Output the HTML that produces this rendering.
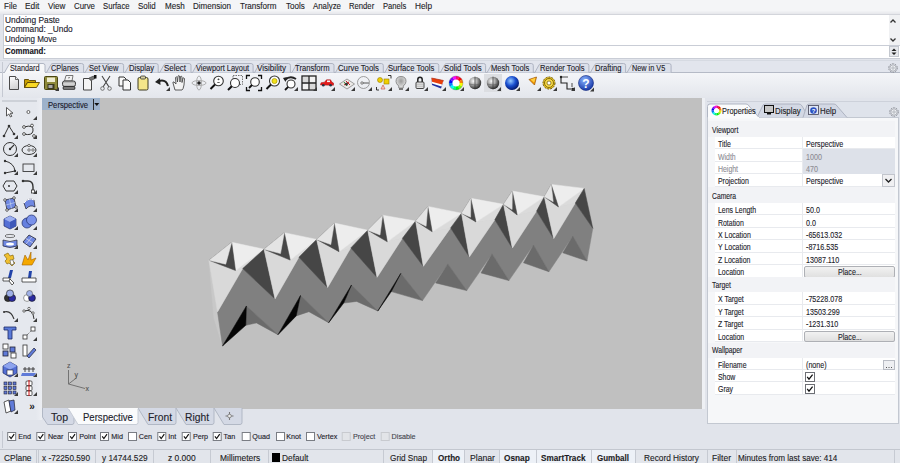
<!DOCTYPE html><html><head><meta charset="utf-8"><style>
*{margin:0;padding:0;box-sizing:border-box}
body{width:900px;height:463px;overflow:hidden;position:relative;background:#e1e4eb;font-family:"Liberation Sans", sans-serif;font-size:8px;color:#1c1c24}
.ab{position:absolute}
.t{position:absolute;white-space:nowrap;-webkit-text-stroke:0.12px currentColor}
</style></head><body>
<div class="ab" style="left:0px;top:0px;width:900px;height:14px;background:linear-gradient(#f4f5f7 0,#f4f5f7 75%,#e6e7eb 100%)"></div>
<div class="t" style="left:4.20px;top:1.65px;font-size:8.8px;line-height:8.8px;color:#1e1e28;transform:scaleX(0.917);transform-origin:0 0;">File</div>
<div class="t" style="left:25.30px;top:1.65px;font-size:8.8px;line-height:8.8px;color:#1e1e28;transform:scaleX(0.950);transform-origin:0 0;">Edit</div>
<div class="t" style="left:47.80px;top:1.65px;font-size:8.8px;line-height:8.8px;color:#1e1e28;transform:scaleX(0.920);transform-origin:0 0;">View</div>
<div class="t" style="left:73.70px;top:1.65px;font-size:8.8px;line-height:8.8px;color:#1e1e28;transform:scaleX(0.895);transform-origin:0 0;">Curve</div>
<div class="t" style="left:103.20px;top:1.65px;font-size:8.8px;line-height:8.8px;color:#1e1e28;transform:scaleX(0.874);transform-origin:0 0;">Surface</div>
<div class="t" style="left:137.80px;top:1.65px;font-size:8.8px;line-height:8.8px;color:#1e1e28;transform:scaleX(0.904);transform-origin:0 0;">Solid</div>
<div class="t" style="left:164.50px;top:1.65px;font-size:8.8px;line-height:8.8px;color:#1e1e28;transform:scaleX(0.915);transform-origin:0 0;">Mesh</div>
<div class="t" style="left:192.80px;top:1.65px;font-size:8.8px;line-height:8.8px;color:#1e1e28;transform:scaleX(0.914);transform-origin:0 0;">Dimension</div>
<div class="t" style="left:239.80px;top:1.65px;font-size:8.8px;line-height:8.8px;color:#1e1e28;transform:scaleX(0.918);transform-origin:0 0;">Transform</div>
<div class="t" style="left:285.70px;top:1.65px;font-size:8.8px;line-height:8.8px;color:#1e1e28;transform:scaleX(0.915);transform-origin:0 0;">Tools</div>
<div class="t" style="left:313.30px;top:1.65px;font-size:8.8px;line-height:8.8px;color:#1e1e28;transform:scaleX(0.894);transform-origin:0 0;">Analyze</div>
<div class="t" style="left:349.20px;top:1.65px;font-size:8.8px;line-height:8.8px;color:#1e1e28;transform:scaleX(0.873);transform-origin:0 0;">Render</div>
<div class="t" style="left:383.10px;top:1.65px;font-size:8.8px;line-height:8.8px;color:#1e1e28;transform:scaleX(0.866);transform-origin:0 0;">Panels</div>
<div class="t" style="left:414.60px;top:1.65px;font-size:8.8px;line-height:8.8px;color:#1e1e28;transform:scaleX(0.939);transform-origin:0 0;">Help</div>
<div class="ab" style="left:3px;top:14px;width:897px;height:45px;background:#fff;border-top:1px solid #d3d5db;border-left:1px solid #c9cdd6;border-bottom:1px solid #c9cdd6"></div>
<div class="ab" style="left:889px;top:15px;width:11px;height:30px;background:#f0f1f3"></div>
<div class="ab" style="left:4px;top:45px;width:896px;height:1px;background:#c9cdd6"></div>
<div class="t" style="left:4.90px;top:15.85px;font-size:8.8px;line-height:8.8px;color:#20202c;transform:scaleX(0.949);transform-origin:0 0;">Undoing Paste</div>
<div class="t" style="left:4.90px;top:25.45px;font-size:8.8px;line-height:8.8px;color:#20202c;transform:scaleX(0.948);transform-origin:0 0;">Command: _Undo</div>
<div class="t" style="left:4.90px;top:35.05px;font-size:8.8px;line-height:8.8px;color:#20202c;transform:scaleX(0.913);transform-origin:0 0;">Undoing Move</div>
<div class="t" style="left:4.90px;top:46.75px;font-size:8.8px;line-height:8.8px;color:#15151c;font-weight:bold;transform:scaleX(0.892);transform-origin:0 0;">Command:</div>
<svg class="ab" style="left:887px;top:15px" width="12" height="42" viewBox="0 0 12 42"><path d="M3.5 7.5 L6 5 L8.5 7.5" fill="none" stroke="#333" stroke-width="1.3"/><path d="M3.5 23.5 L6 26 L8.5 23.5" fill="none" stroke="#333" stroke-width="1.3"/><rect x="2.5" y="31.5" width="9" height="10" fill="#e6e8ec" stroke="#c4c8cf"/><path d="M4.5 36 L7 33.5 L9.5 36Z M4.5 37.5 L7 40 L9.5 37.5Z" fill="#222"/></svg>
<div class="ab" style="left:0px;top:60px;width:900px;height:13px;background:#e2e5ed"></div>
<div class="ab" style="left:0px;top:60px;width:900px;height:1px;background:#d6dae2"></div>
<div class="ab" style="left:0px;top:72px;width:900px;height:1px;background:#b5bac6"></div>
<svg class="ab" style="left:0;top:58px" width="900" height="16" viewBox="0 58 900 16"><path d="M46.5 72.5 L51.0 64.5 Q51.7 63.5 53.0 63.5 L81.6 63.5 Q83.6 63.5 83.6 65.5 L83.6 72.5" fill="#dce0ea" stroke="#a9afbd" stroke-width="0.9"/><path d="M85.1 72.5 L89.6 64.5 Q90.3 63.5 91.6 63.5 L121.6 63.5 Q123.6 63.5 123.6 65.5 L123.6 72.5" fill="#dce0ea" stroke="#a9afbd" stroke-width="0.9"/><path d="M125.1 72.5 L129.6 64.5 Q130.29999999999998 63.5 131.6 63.5 L156.2 63.5 Q158.2 63.5 158.2 65.5 L158.2 72.5" fill="#dce0ea" stroke="#a9afbd" stroke-width="0.9"/><path d="M159.7 72.5 L164.2 64.5 Q164.89999999999998 63.5 166.2 63.5 L189 63.5 Q191 63.5 191 65.5 L191 72.5" fill="#dce0ea" stroke="#a9afbd" stroke-width="0.9"/><path d="M192.5 72.5 L197.0 64.5 Q197.7 63.5 199.0 63.5 L251.1 63.5 Q253.1 63.5 253.1 65.5 L253.1 72.5" fill="#dce0ea" stroke="#a9afbd" stroke-width="0.9"/><path d="M254.6 72.5 L259.1 64.5 Q259.8 63.5 261.1 63.5 L288.4 63.5 Q290.4 63.5 290.4 65.5 L290.4 72.5" fill="#dce0ea" stroke="#a9afbd" stroke-width="0.9"/><path d="M291.9 72.5 L296.4 64.5 Q297.09999999999997 63.5 298.4 63.5 L332 63.5 Q334 63.5 334 65.5 L334 72.5" fill="#dce0ea" stroke="#a9afbd" stroke-width="0.9"/><path d="M335.5 72.5 L340.0 64.5 Q340.7 63.5 342.0 63.5 L381.3 63.5 Q383.3 63.5 383.3 65.5 L383.3 72.5" fill="#dce0ea" stroke="#a9afbd" stroke-width="0.9"/><path d="M384.8 72.5 L389.3 64.5 Q390.0 63.5 391.3 63.5 L436.8 63.5 Q438.8 63.5 438.8 65.5 L438.8 72.5" fill="#dce0ea" stroke="#a9afbd" stroke-width="0.9"/><path d="M440.3 72.5 L444.8 64.5 Q445.5 63.5 446.8 63.5 L483.6 63.5 Q485.6 63.5 485.6 65.5 L485.6 72.5" fill="#dce0ea" stroke="#a9afbd" stroke-width="0.9"/><path d="M487.1 72.5 L491.6 64.5 Q492.3 63.5 493.6 63.5 L531.3 63.5 Q533.3 63.5 533.3 65.5 L533.3 72.5" fill="#dce0ea" stroke="#a9afbd" stroke-width="0.9"/><path d="M534.8 72.5 L539.3 64.5 Q540.0 63.5 541.3 63.5 L586.9 63.5 Q588.9 63.5 588.9 65.5 L588.9 72.5" fill="#dce0ea" stroke="#a9afbd" stroke-width="0.9"/><path d="M590.4 72.5 L594.9 64.5 Q595.6 63.5 596.9 63.5 L623.6 63.5 Q625.6 63.5 625.6 65.5 L625.6 72.5" fill="#dce0ea" stroke="#a9afbd" stroke-width="0.9"/><path d="M627.1 72.5 L631.6 64.5 Q632.3000000000001 63.5 633.6 63.5 L669.1 63.5 Q671.1 63.5 671.1 65.5 L671.1 72.5" fill="#dce0ea" stroke="#a9afbd" stroke-width="0.9"/><path d="M4.5 72.5 L9.0 64.5 Q9.7 63.5 11.0 63.5 L43 63.5 Q45 63.5 45 65.5 L45 72.5" fill="#f6f7f9" stroke="#a9afbd" stroke-width="0.9"/><rect x="5" y="72" width="40" height="1.2" fill="#f6f7f9"/></svg>
<div class="t" style="left:10.20px;top:64.45px;font-size:8.8px;line-height:8.8px;color:#1e1e2a;transform:scaleX(0.829);transform-origin:0 0;">Standard</div>
<div class="t" style="left:50.50px;top:64.45px;font-size:8.8px;line-height:8.8px;color:#1e1e2a;transform:scaleX(0.833);transform-origin:0 0;">CPlanes</div>
<div class="t" style="left:89.30px;top:64.45px;font-size:8.8px;line-height:8.8px;color:#1e1e2a;transform:scaleX(0.850);transform-origin:0 0;">Set View</div>
<div class="t" style="left:129.30px;top:64.45px;font-size:8.8px;line-height:8.8px;color:#1e1e2a;transform:scaleX(0.866);transform-origin:0 0;">Display</div>
<div class="t" style="left:163.90px;top:64.45px;font-size:8.8px;line-height:8.8px;color:#1e1e2a;transform:scaleX(0.899);transform-origin:0 0;">Select</div>
<div class="t" style="left:195.70px;top:64.45px;font-size:8.8px;line-height:8.8px;color:#1e1e2a;transform:scaleX(0.844);transform-origin:0 0;">Viewport Layout</div>
<div class="t" style="left:257.10px;top:64.45px;font-size:8.8px;line-height:8.8px;color:#1e1e2a;transform:scaleX(0.917);transform-origin:0 0;">Visibility</div>
<div class="t" style="left:294.70px;top:64.45px;font-size:8.8px;line-height:8.8px;color:#1e1e2a;transform:scaleX(0.868);transform-origin:0 0;">Transform</div>
<div class="t" style="left:338.00px;top:64.45px;font-size:8.8px;line-height:8.8px;color:#1e1e2a;transform:scaleX(0.883);transform-origin:0 0;">Curve Tools</div>
<div class="t" style="left:388.20px;top:64.45px;font-size:8.8px;line-height:8.8px;color:#1e1e2a;transform:scaleX(0.871);transform-origin:0 0;">Surface Tools</div>
<div class="t" style="left:443.60px;top:64.45px;font-size:8.8px;line-height:8.8px;color:#1e1e2a;transform:scaleX(0.889);transform-origin:0 0;">Solid Tools</div>
<div class="t" style="left:491.10px;top:64.45px;font-size:8.8px;line-height:8.8px;color:#1e1e2a;transform:scaleX(0.864);transform-origin:0 0;">Mesh Tools</div>
<div class="t" style="left:539.90px;top:64.45px;font-size:8.8px;line-height:8.8px;color:#1e1e2a;transform:scaleX(0.863);transform-origin:0 0;">Render Tools</div>
<div class="t" style="left:595.10px;top:64.45px;font-size:8.8px;line-height:8.8px;color:#1e1e2a;transform:scaleX(0.860);transform-origin:0 0;">Drafting</div>
<div class="t" style="left:632.40px;top:64.45px;font-size:8.8px;line-height:8.8px;color:#1e1e2a;transform:scaleX(0.828);transform-origin:0 0;">New in V5</div>
<svg class="ab" style="left:887.0px;top:61.5px" width="12" height="12" viewBox="0 0 12 12"><circle cx="6" cy="6" r="4.3" fill="none" stroke="#8a8d94" stroke-width="1" stroke-dasharray="1.6 1.1"/><circle cx="6" cy="6" r="3.2" fill="#eef0f4" stroke="#9a9da4" stroke-width="0.8"/><circle cx="6" cy="6" r="1.2" fill="none" stroke="#9a9da4" stroke-width="0.7"/></svg>
<div class="ab" style="left:0px;top:73px;width:900px;height:25px;background:linear-gradient(#f4f5f8,#e3e6ec)"></div>
<div class="ab" style="left:2px;top:62px;width:1px;height:35px;background:#c5c9d2"></div>
<svg class="ab" style="left:4.5px;top:74.0px" width="18" height="18" viewBox="0 0 18 18"><defs><linearGradient id="ndg" x1="0" y1="0" x2="0.3" y2="1"><stop offset="0" stop-color="#fff"/><stop offset="1" stop-color="#d4d4d4"/></linearGradient></defs><path d="M4.5 2.5 L10.5 2.5 L13.5 5.5 L13.5 15.5 L4.5 15.5Z" fill="url(#ndg)" stroke="#4a4a4a" stroke-width="1"/><path d="M10.5 2.5 L10.5 5.5 L13.5 5.5" fill="#e8e8e8" stroke="#4a4a4a" stroke-width="0.8"/></svg><svg class="ab" style="left:23.0px;top:74.0px" width="18" height="18" viewBox="0 0 18 18"><path d="M1.5 5.5 L5.5 5.5 L6.5 6.5 L12.5 6.5 L12.5 8.5 L4.5 8.5 L1.5 13.5Z" fill="#c9a000" stroke="#5a4400" stroke-width="0.9"/><path d="M1.5 13.5 L4.5 8.5 L16.5 8.5 L13.5 13.5Z" fill="#f9d823" stroke="#5a4400" stroke-width="0.9"/></svg><svg class="ab" style="left:42.0px;top:74.0px" width="18" height="18" viewBox="0 0 18 18"><rect x="2.5" y="2.5" width="13" height="13" rx="1" fill="#8e8a3a" stroke="#4a4612" stroke-width="1"/><rect x="5" y="3.5" width="8" height="4.5" fill="#eeecd0"/><rect x="5.5" y="10" width="7" height="5" fill="#3c3a20"/><rect x="6.5" y="11" width="4" height="3" fill="#a8a8a8"/><path d="M17 17 L17 13 L13 17Z" fill="#3a3a3a"/></svg><svg class="ab" style="left:60.0px;top:74.0px" width="18" height="18" viewBox="0 0 18 18"><path d="M6 1.5 L13 1.5 L12 7 L4.5 7Z" fill="#f2f2f2" stroke="#555" stroke-width="0.8"/><path d="M8 4 L10 3.5" stroke="#666" stroke-width="0.8"/><rect x="2.5" y="7" width="13" height="5.5" rx="2" fill="#b8b8b8" stroke="#333" stroke-width="0.9"/><path d="M3.5 10 L14.5 10" stroke="#eee" stroke-width="0.9"/><rect x="3" y="12.5" width="12" height="3" rx="1" fill="#555" stroke="#222" stroke-width="0.6"/><path d="M4 14 L14 14" stroke="#ccc" stroke-width="0.6"/></svg><svg class="ab" style="left:80.0px;top:74.0px" width="18" height="18" viewBox="0 0 18 18"><path d="M3.5 4.5 L9 4.5 L11.5 7 L11.5 16 L3.5 16Z" fill="#f4f4f4" stroke="#444" stroke-width="1"/><path d="M9 4 L13.5 2 L15 4.5 L11 6.5Z" fill="#777" stroke="#333" stroke-width="0.6"/><rect x="14" y="1" width="2.5" height="3.5" fill="#111"/></svg><svg class="ab" style="left:97.0px;top:74.0px" width="18" height="18" viewBox="0 0 18 18"><path d="M5 2 L12 13 M13 2 L6 13" stroke="#444" stroke-width="1.1"/><circle cx="5.5" cy="14.5" r="1.8" fill="none" stroke="#666" stroke-width="0.9"/><circle cx="12.5" cy="14.5" r="1.8" fill="none" stroke="#666" stroke-width="0.9"/></svg><svg class="ab" style="left:116.0px;top:74.0px" width="18" height="18" viewBox="0 0 18 18"><path d="M3 3 L8 3 L10 5 L10 12 L3 12Z" fill="#fafafa" stroke="#333" stroke-width="1"/><path d="M7 6 L12 6 L14.5 8.5 L14.5 16 L7 16Z" fill="#fafafa" stroke="#333" stroke-width="1"/></svg><svg class="ab" style="left:134.0px;top:74.0px" width="18" height="18" viewBox="0 0 18 18"><rect x="4" y="3.5" width="10" height="12.5" rx="1.5" fill="#f4e68a" stroke="#3c3a20" stroke-width="1"/><rect x="6.5" y="2" width="5" height="3" rx="1" fill="#d8d0a0" stroke="#333" stroke-width="0.8"/></svg><svg class="ab" style="left:152.5px;top:74.0px" width="18" height="18" viewBox="0 0 18 18"><path d="M15 12 Q13 5 6 7" fill="none" stroke="#222" stroke-width="2"/><path d="M2 8 L7 4 L7.5 11Z" fill="#222"/><path d="M17 17 L17 13 L13 17Z" fill="#3a3a3a"/></svg><svg class="ab" style="left:170.0px;top:74.0px" width="18" height="18" viewBox="0 0 18 18"><path d="M5 16 L3 9 Q2.5 7.5 4 8 L6 10 L5.5 3.5 Q6 2 7 3.5 L7.5 8 L8 2 Q9 1 9.5 2 L10 8 L10.5 2.5 Q11.5 1.5 12 3 L12 8.5 L13 4 Q14 3.5 14.5 4.5 L14 11 Q13 16 12 16Z" fill="#f3f3f3" stroke="#4a4a4a" stroke-width="0.9"/></svg><svg class="ab" style="left:189.7px;top:74.0px" width="18" height="18" viewBox="0 0 18 18"><ellipse cx="9" cy="9" rx="7" ry="2.5" fill="none" stroke="#a8a8a8" stroke-width="0.9"/><ellipse cx="9" cy="9" rx="2.5" ry="7" fill="none" stroke="#a8a8a8" stroke-width="0.9"/><circle cx="9" cy="9" r="1.8" fill="#222"/></svg><svg class="ab" style="left:208.0px;top:74.0px" width="18" height="18" viewBox="0 0 18 18"><circle cx="10.5" cy="7" r="4.8" fill="#fff" stroke="#333" stroke-width="1.1"/><path d="M7 10.5 L2.5 15" stroke="#111" stroke-width="2"/><path d="M10.5 4.5 L10.5 6.2 M9.5 5.4 L11.5 5.4 M9.3 8.5 L11.7 8.5" stroke="#333" stroke-width="0.8"/></svg><svg class="ab" style="left:226.0px;top:74.0px" width="18" height="18" viewBox="0 0 18 18"><rect x="7" y="1.5" width="9.5" height="9" fill="none" stroke="#666" stroke-width="0.9" stroke-dasharray="1.5 1"/><circle cx="9" cy="9" r="4.5" fill="#fff" stroke="#333" stroke-width="1.1"/><path d="M5.8 12.2 L2 16" stroke="#111" stroke-width="2"/></svg><svg class="ab" style="left:244.7px;top:74.0px" width="18" height="18" viewBox="0 0 18 18"><path d="M1.5 5 L1.5 1.5 L5 1.5 M13 1.5 L16.5 1.5 L16.5 5 M16.5 13 L16.5 16.5 L13 16.5 M5 16.5 L1.5 16.5 L1.5 13" fill="none" stroke="#111" stroke-width="1.3"/><circle cx="10" cy="8" r="4.3" fill="#fff" stroke="#333" stroke-width="1.1"/><path d="M7 11 L4 14" stroke="#111" stroke-width="1.8"/></svg><svg class="ab" style="left:264.0px;top:74.0px" width="18" height="18" viewBox="0 0 18 18"><circle cx="10.5" cy="7" r="5" fill="#fff" stroke="#333" stroke-width="1.1"/><circle cx="10.5" cy="7" r="2.6" fill="#f2e21a" stroke="#998800" stroke-width="0.6"/><path d="M7 10.5 L2.5 15" stroke="#111" stroke-width="2"/></svg><svg class="ab" style="left:281.0px;top:74.0px" width="18" height="18" viewBox="0 0 18 18"><path d="M4 6 Q9 1 15 5" fill="none" stroke="#222" stroke-width="1.8"/><path d="M2 4 L6 3 L4.5 8Z" fill="#222"/><circle cx="10" cy="10" r="4" fill="#fff" stroke="#333" stroke-width="1.1"/><path d="M7.2 12.8 L4 16" stroke="#111" stroke-width="1.8"/><path d="M17 17 L17 13 L13 17Z" fill="#3a3a3a"/></svg><svg class="ab" style="left:299.7px;top:74.0px" width="18" height="18" viewBox="0 0 18 18"><rect x="2" y="2" width="14" height="14" fill="#f2f2f2" stroke="#222" stroke-width="1.3"/><path d="M9 2 L9 16 M2 9 L16 9" stroke="#222" stroke-width="1.3"/><rect x="3" y="3" width="5" height="5" fill="#d9d9d9"/><rect x="10" y="10" width="5" height="5" fill="#d9d9d9"/><path d="M17 17 L17 13 L13 17Z" fill="#3a3a3a"/></svg><svg class="ab" style="left:318.0px;top:74.0px" width="18" height="18" viewBox="0 0 18 18"><path d="M2.5 11 L3 8.8 L6.5 8.2 L8.5 5.8 L12.5 5.8 L14 8.2 L15.5 9 L15.5 11.2Z" fill="#e41a1a" stroke="#9a0c0c" stroke-width="0.5"/><rect x="9" y="6.5" width="3" height="1.6" fill="#f4f4f4"/><circle cx="5.3" cy="11.3" r="1.3" fill="#234"/><circle cx="12.6" cy="11.3" r="1.3" fill="#234"/><path d="M17 17 L17 13 L13 17Z" fill="#3a3a3a"/></svg><svg class="ab" style="left:338.0px;top:74.0px" width="18" height="18" viewBox="0 0 18 18"><path d="M1.5 10 L9 5 L16.5 10 L9 15Z" fill="#eceae8" stroke="#888" stroke-width="0.8"/><path d="M6 11 L11 8 M8 7 L12 11" stroke="#c22" stroke-width="1"/><path d="M6 8 L9 12" stroke="#383" stroke-width="1"/><circle cx="8.5" cy="10" r="1.5" fill="#333"/><path d="M17 17 L17 13 L13 17Z" fill="#3a3a3a"/></svg><svg class="ab" style="left:355.4px;top:74.0px" width="18" height="18" viewBox="0 0 18 18"><circle cx="8.5" cy="8.5" r="6" fill="none" stroke="#888" stroke-width="0.8"/><path d="M7.5 9 L14 9" stroke="#444" stroke-width="0.9"/><circle cx="7" cy="9" r="1.2" fill="#fff" stroke="#444" stroke-width="0.7"/><path d="M17 17 L17 13 L13 17Z" fill="#3a3a3a"/></svg><svg class="ab" style="left:374.5px;top:74.0px" width="18" height="18" viewBox="0 0 18 18"><circle cx="5" cy="6" r="2.5" fill="#f0d000" stroke="#997c00" stroke-width="0.6"/><rect x="9" y="5" width="5" height="5" fill="#f0d000" stroke="#997c00" stroke-width="0.6"/><path d="M6 15 L8 11 L10 15Z" fill="#f5d5c0" stroke="#c55" stroke-width="0.7"/><path d="M13 1.5 L16 1.5 L16 4.5" fill="none" stroke="#333" stroke-width="1"/><path d="M1.5 13 L1.5 16 L4 16" fill="none" stroke="#333" stroke-width="1"/><path d="M17 17 L17 13 L13 17Z" fill="#3a3a3a"/></svg><svg class="ab" style="left:392.0px;top:74.0px" width="18" height="18" viewBox="0 0 18 18"><defs><radialGradient id="blg" cx="0.5" cy="0.4" r="0.6"><stop offset="0" stop-color="#9a9a9a"/><stop offset="1" stop-color="#e8e8e8"/></radialGradient></defs><path d="M9 2.5 Q14 2.5 14 7.5 Q14 9.8 11.3 12 L11.2 14 L6.8 14 L6.7 12 Q4 9.8 4 7.5 Q4 2.5 9 2.5Z" fill="url(#blg)" stroke="#777" stroke-width="0.8"/><rect x="7" y="14" width="4" height="2" fill="#777"/><path d="M17 17 L17 13 L13 17Z" fill="#3a3a3a"/></svg><svg class="ab" style="left:410.5px;top:74.0px" width="18" height="18" viewBox="0 0 18 18"><path d="M6.8 8 L6.8 5.6 Q6.8 3.3 9 3.3 Q11.2 3.3 11.2 5.6 L11.2 8" fill="none" stroke="#222" stroke-width="1.5"/><rect x="5" y="8" width="8" height="6.5" rx="1" fill="#e0e0e0" stroke="#333" stroke-width="0.9"/><path d="M6 10.3 H12 M6 12.3 H12" stroke="#aaa" stroke-width="0.6"/><path d="M17 17 L17 13 L13 17Z" fill="#3a3a3a"/></svg><svg class="ab" style="left:428.8px;top:74.0px" width="18" height="18" viewBox="0 0 18 18"><path d="M2.5 4 L14.5 6.5 L12 14.5 L3 11Z" fill="#2030a0"/><path d="M2.5 4 L14.5 6.5 L12.5 12.5 L3 9.5Z" fill="#fff"/><path d="M2.5 4 L14.5 6.5 L13 10.5 L3 7.8Z" fill="#e8400c"/><path d="M2.5 4 L14.5 6.5" stroke="#b02000" stroke-width="0.6"/><path d="M17 17 L17 13 L13 17Z" fill="#3a3a3a"/></svg><svg class="ab" style="left:447.0px;top:74.0px" width="18" height="18" viewBox="0 0 18 18"><path d="M9 9 L16.0 9.0 A7 7 0 0 1 15.000171104914786 12.605266524370379Z" fill="hsl(60,95%,50%)"/><path d="M9 9 L15.062177826491071 12.5 A7 7 0 0 1 12.39366734172436 15.122337949975769Z" fill="hsl(90,95%,50%)"/><path d="M9 9 L12.5 15.06217782649107 A7 7 0 0 1 8.877833154939015 15.998933866094738Z" fill="hsl(120,95%,50%)"/><path d="M9 9 L9.0 16.0 A7 7 0 0 1 5.39473347562962 15.000171104914786Z" fill="hsl(150,95%,50%)"/><path d="M9 9 L5.500000000000002 15.062177826491071 A7 7 0 0 1 2.87766205002423 12.39366734172436Z" fill="hsl(180,95%,50%)"/><path d="M9 9 L2.9378221735089287 12.5 A7 7 0 0 1 2.001066133905261 8.877833154939015Z" fill="hsl(210,95%,50%)"/><path d="M9 9 L2.0 9.0 A7 7 0 0 1 2.999828895085214 5.3947334756296215Z" fill="hsl(240,95%,50%)"/><path d="M9 9 L2.9378221735089296 5.499999999999999 A7 7 0 0 1 5.606332658275642 2.8776620500242283Z" fill="hsl(270,95%,50%)"/><path d="M9 9 L5.4999999999999964 2.9378221735089314 A7 7 0 0 1 9.122166845060981 2.001066133905261Z" fill="hsl(300,95%,50%)"/><path d="M9 9 L8.999999999999998 2.0 A7 7 0 0 1 12.605266524370379 2.999828895085214Z" fill="hsl(330,95%,50%)"/><path d="M9 9 L12.5 2.9378221735089296 A7 7 0 0 1 15.12233794997577 5.606332658275642Z" fill="hsl(0,95%,50%)"/><path d="M9 9 L15.06217782649107 5.4999999999999964 A7 7 0 0 1 15.998933866094738 9.122166845060981Z" fill="hsl(30,95%,50%)"/><circle cx="9" cy="9" r="3.6" fill="#fff"/><circle cx="9" cy="9" r="7" fill="none" stroke="#555" stroke-width="0.3"/><path d="M17 17 L17 13 L13 17Z" fill="#3a3a3a"/></svg><svg class="ab" style="left:465.5px;top:74.0px" width="18" height="18" viewBox="0 0 18 18"><defs><radialGradient id="sg" cx="0.38" cy="0.35" r="0.68"><stop offset="0" stop-color="#fafafa"/><stop offset="0.45" stop-color="#a8a8a8"/><stop offset="1" stop-color="#222"/></radialGradient></defs><circle cx="9" cy="9" r="6.2" fill="url(#sg)"/><path d="M9 2.8 L9 15.2" stroke="#333" stroke-width="0.7"/><path d="M3 10 Q9 12 15 10" fill="none" stroke="#555" stroke-width="0.5"/></svg><svg class="ab" style="left:484.0px;top:74.0px" width="18" height="18" viewBox="0 0 18 18"><rect x="0" y="0" width="18" height="18" fill="#dcdee2"/><circle cx="9" cy="9" r="6.2" fill="url(#sg)"/><path d="M9 2.8 L9 15.2" stroke="#333" stroke-width="0.7"/><path d="M3 10 Q9 12 15 10" fill="none" stroke="#555" stroke-width="0.5"/><path d="M17 17 L17 13 L13 17Z" fill="#3a3a3a"/></svg><svg class="ab" style="left:502.5px;top:74.0px" width="18" height="18" viewBox="0 0 18 18"><defs><radialGradient id="bg2" cx="0.4" cy="0.35" r="0.7"><stop offset="0" stop-color="#9cf"/><stop offset="0.5" stop-color="#1a4fd0"/><stop offset="1" stop-color="#001060"/></radialGradient></defs><circle cx="9" cy="9" r="7" fill="url(#bg2)"/><path d="M17 17 L17 13 L13 17Z" fill="#3a3a3a"/></svg><svg class="ab" style="left:524.0px;top:74.0px" width="18" height="18" viewBox="0 0 18 18"><path d="M5 5.5 L12.5 3 L10.5 11Z" fill="#f59a00" stroke="#9a5000" stroke-width="0.7"/><path d="M6.5 5.5 L11.5 3.8 L10.2 8.5Z" fill="#ffd040"/><path d="M17 17 L17 13 L13 17Z" fill="#3a3a3a"/></svg><svg class="ab" style="left:539.5px;top:74.0px" width="18" height="18" viewBox="0 0 18 18"><circle cx="9" cy="9" r="6" fill="#f0c820" stroke="#6a5400" stroke-width="1" stroke-dasharray="2 1"/><circle cx="9" cy="9" r="4.5" fill="#f5d84a" stroke="#6a5400" stroke-width="0.8"/><circle cx="9" cy="9" r="2" fill="#fff" stroke="#6a5400" stroke-width="0.7"/><path d="M17 17 L17 13 L13 17Z" fill="#3a3a3a"/></svg><svg class="ab" style="left:558.0px;top:74.0px" width="18" height="18" viewBox="0 0 18 18"><path d="M3 3 L3 9 L9 9 L9 15 L15 15" fill="none" stroke="#222" stroke-width="1.1"/><path d="M3 3 L10 3" stroke="#222" stroke-width="0.8"/><circle cx="3" cy="3" r="1.2" fill="#222"/><circle cx="15" cy="15" r="1.2" fill="#222"/><path d="M14 9 L14 13" stroke="#222" stroke-width="0.8"/><path d="M17 17 L17 13 L13 17Z" fill="#3a3a3a"/></svg><svg class="ab" style="left:576.5px;top:74.0px" width="18" height="18" viewBox="0 0 18 18"><defs><radialGradient id="hg" cx="0.4" cy="0.3" r="0.7"><stop offset="0" stop-color="#8ab4ff"/><stop offset="1" stop-color="#1838a8"/></radialGradient></defs><circle cx="9" cy="9" r="7.5" fill="url(#hg)" stroke="#10287a" stroke-width="0.6"/><text x="9" y="13.5" font-family="Liberation Sans" font-size="12" font-weight="bold" text-anchor="middle" fill="#fff">?</text><path d="M17 17.5 L17 13.5 L13 17.5Z" fill="#3a3a3a"/></svg>
<div class="ab" style="left:0px;top:98px;width:42px;height:322px;background:linear-gradient(90deg,#e5e8ee 85%,#eceef3 100%)"></div>
<div class="ab" style="left:2px;top:100px;width:35px;height:2px;background:#cdd1d8"></div>
<svg class="ab" style="left:0.5px;top:103.3px" width="18" height="18" viewBox="0 0 18 18"><path d="M5.5 4.5 L5.5 13 L7.8 11 L9.5 14 L10.8 13.3 L9.2 10.3 L12 10.2Z" fill="#fff" stroke="#444" stroke-width="0.9"/></svg><svg class="ab" style="left:19.5px;top:103.3px" width="18" height="18" viewBox="0 0 18 18"><circle cx="8.4" cy="9" r="1.5" fill="#fff" stroke="#555" stroke-width="0.9"/><path d="M17 17 L17 13 L13 17Z" fill="#3a3a3a"/></svg><svg class="ab" style="left:0.5px;top:121.65px" width="18" height="18" viewBox="0 0 18 18"><path d="M3 14 L8 4 L13 12" fill="none" stroke="#333" stroke-width="1"/><circle cx="3" cy="14" r="1.3" fill="#333"/><circle cx="8" cy="4" r="1.3" fill="#333"/><circle cx="13" cy="12" r="1.3" fill="#333"/><path d="M17 17 L17 13 L13 17Z" fill="#3a3a3a"/></svg><svg class="ab" style="left:19.5px;top:121.65px" width="18" height="18" viewBox="0 0 18 18"><path d="M4 5 Q14 2 13 9 Q12 14 4 12" fill="none" stroke="#333" stroke-width="1"/><circle cx="4" cy="5" r="1.4" fill="#fff" stroke="#333" stroke-width="0.8"/><circle cx="12" cy="3.5" r="1.4" fill="#fff" stroke="#333" stroke-width="0.8"/><circle cx="4" cy="12" r="1.4" fill="#fff" stroke="#333" stroke-width="0.8"/><circle cx="14" cy="14" r="1.4" fill="#fff" stroke="#333" stroke-width="0.8"/><path d="M17 17 L17 13 L13 17Z" fill="#3a3a3a"/></svg><svg class="ab" style="left:0.5px;top:140.0px" width="18" height="18" viewBox="0 0 18 18"><circle cx="9" cy="9" r="6.5" fill="none" stroke="#333" stroke-width="1"/><path d="M9 9 L13 5" stroke="#333" stroke-width="1.1"/><circle cx="9" cy="9" r="1.2" fill="#333"/><path d="M17 17 L17 13 L13 17Z" fill="#3a3a3a"/></svg><svg class="ab" style="left:19.5px;top:140.0px" width="18" height="18" viewBox="0 0 18 18"><ellipse cx="9" cy="10" rx="7" ry="4.5" fill="none" stroke="#333" stroke-width="1"/><circle cx="9" cy="5.5" r="1.2" fill="#fff" stroke="#333" stroke-width="0.7"/><circle cx="9" cy="10" r="1.2" fill="#fff" stroke="#333" stroke-width="0.7"/><circle cx="13" cy="10" r="1.2" fill="#fff" stroke="#333" stroke-width="0.7"/><path d="M17 17 L17 13 L13 17Z" fill="#3a3a3a"/></svg><svg class="ab" style="left:0.5px;top:158.35px" width="18" height="18" viewBox="0 0 18 18"><path d="M4 3 Q13 5 14 13 L4 15" fill="none" stroke="#333" stroke-width="1"/><circle cx="4" cy="3" r="1.2" fill="#333"/><circle cx="14" cy="13" r="1.2" fill="#333"/><circle cx="4" cy="15" r="1.2" fill="#333"/><path d="M17 17 L17 13 L13 17Z" fill="#3a3a3a"/></svg><svg class="ab" style="left:19.5px;top:158.35px" width="18" height="18" viewBox="0 0 18 18"><rect x="3" y="6" width="11" height="7.5" fill="none" stroke="#3a3a3a" stroke-width="0.9"/><path d="M17 17 L17 13 L13 17Z" fill="#3a3a3a"/></svg><svg class="ab" style="left:0.5px;top:176.7px" width="18" height="18" viewBox="0 0 18 18"><path d="M5 4 L13 4 L16 9 L13 14 L5 14 L2 9Z" fill="none" stroke="#333" stroke-width="1"/><circle cx="8" cy="9" r="1" fill="#333"/><path d="M17 17 L17 13 L13 17Z" fill="#3a3a3a"/></svg><svg class="ab" style="left:19.5px;top:176.7px" width="18" height="18" viewBox="0 0 18 18"><path d="M3 4 L8 4 Q13 4 13 10 L13 14" fill="none" stroke="#333" stroke-width="1.4"/><circle cx="3" cy="4" r="1.3" fill="#333"/><rect x="11.5" y="13" width="3" height="3" fill="#fff" stroke="#333" stroke-width="0.8"/><path d="M17 17 L17 13 L13 17Z" fill="#3a3a3a"/></svg><svg class="ab" style="left:0.5px;top:195.05px" width="18" height="18" viewBox="0 0 18 18"><path d="M4 5 L13 3 L15 12 L6 15Z" fill="#6f88e2" stroke="#223" stroke-width="0.7"/><path d="M8.5 4 L10.5 13.5 M5 10 L14 7.5" stroke="#cde" stroke-width="0.6"/><circle cx="4" cy="5" r="1.3" fill="#fff" stroke="#222" stroke-width="0.7"/><circle cx="13" cy="3" r="1.3" fill="#fff" stroke="#222" stroke-width="0.7"/><circle cx="15" cy="12" r="1.3" fill="#fff" stroke="#222" stroke-width="0.7"/><circle cx="6" cy="15" r="1.3" fill="#fff" stroke="#222" stroke-width="0.7"/><path d="M17 17 L17 13 L13 17Z" fill="#3a3a3a"/></svg><svg class="ab" style="left:19.5px;top:195.05px" width="18" height="18" viewBox="0 0 18 18"><path d="M4 8 Q9 2 14 5 L15 12 Q10 9 6 14Z" fill="#6f88e2" stroke="#223" stroke-width="0.7"/><path d="M4 8 Q9 2 14 5" fill="none" stroke="#fff" stroke-width="1"/><path d="M17 17 L17 13 L13 17Z" fill="#3a3a3a"/></svg><svg class="ab" style="left:0.5px;top:213.4px" width="18" height="18" viewBox="0 0 18 18"><path d="M3 6 L9 3 L15 6 L15 13 L9 16 L3 13Z" fill="#5470d6" stroke="#1c2a66" stroke-width="0.7"/><path d="M3 6 L9 9 L15 6 L9 3Z" fill="#9db0f0"/><path d="M9 9 L9 16 L15 13 L15 6Z" fill="#3d58b8"/><path d="M17 17 L17 13 L13 17Z" fill="#3a3a3a"/></svg><svg class="ab" style="left:19.5px;top:213.4px" width="18" height="18" viewBox="0 0 18 18"><circle cx="7" cy="10" r="5" fill="#6580e0" stroke="#1c2a66" stroke-width="0.7"/><circle cx="11.5" cy="7" r="5" fill="#7a92ea" stroke="#1c2a66" stroke-width="0.7"/><path d="M17 17 L17 13 L13 17Z" fill="#3a3a3a"/></svg><svg class="ab" style="left:0.5px;top:231.75px" width="18" height="18" viewBox="0 0 18 18"><ellipse cx="9" cy="4" rx="5" ry="1.6" fill="none" stroke="#555" stroke-width="0.8"/><path d="M2 8 Q9 11 16 8 L16 14 Q9 17 2 14Z" fill="#6f88e2" stroke="#223" stroke-width="0.7"/><ellipse cx="9" cy="12" rx="4" ry="1.6" fill="#fff"/><path d="M17 17 L17 13 L13 17Z" fill="#3a3a3a"/></svg><svg class="ab" style="left:19.5px;top:231.75px" width="18" height="18" viewBox="0 0 18 18"><path d="M3 10 L9 3 L16 7 L10 15Z" fill="#6f88e2" stroke="#223" stroke-width="0.8"/><path d="M6 6.5 L13 11 M12 5 L6 12" stroke="#dde" stroke-width="0.7"/><path d="M17 17 L17 13 L13 17Z" fill="#3a3a3a"/></svg><svg class="ab" style="left:0.5px;top:250.10000000000002px" width="18" height="18" viewBox="0 0 18 18"><path d="M3 5 L7 3 L9 6 L12 5 L13 9 L11 10 L14 13 L11 16 L8 13 L6 14 L4 11 L6 9Z" fill="#f0c030" stroke="#7a5a00" stroke-width="0.6"/><path d="M9 10 L12 10 L13 14 L10 15Z" fill="#fff" stroke="#555" stroke-width="0.6"/></svg><svg class="ab" style="left:19.5px;top:250.10000000000002px" width="18" height="18" viewBox="0 0 18 18"><path d="M2 15 L5 5 L8 10 L11 2 L11 10 L16 8 L12 15Z" fill="#f5a800" stroke="#a06000" stroke-width="0.6"/></svg><svg class="ab" style="left:0.5px;top:268.45px" width="18" height="18" viewBox="0 0 18 18"><path d="M9 2 L12 2 L10 10 L7 10Z" fill="#2244aa"/><path d="M2 10 L9 10 L9 13 L2 13Z" fill="#fff" stroke="#333" stroke-width="0.8"/><path d="M9 11 L13 15 L11 17 L8 13Z" fill="#fff" stroke="#333" stroke-width="0.8"/></svg><svg class="ab" style="left:19.5px;top:268.45px" width="18" height="18" viewBox="0 0 18 18"><path d="M9 3 L12 3 L11 10 L8 10Z" fill="#2244aa"/><path d="M2 10 L16 10 L16 14 L2 14Z" fill="#fff" stroke="#333" stroke-width="0.8"/></svg><svg class="ab" style="left:0.5px;top:286.8px" width="18" height="18" viewBox="0 0 18 18"><circle cx="7" cy="11" r="3.6" fill="#333" stroke="#111" stroke-width="0.6"/><circle cx="11" cy="11" r="3.6" fill="#2a2aa0" stroke="#111" stroke-width="0.6"/><circle cx="9" cy="6.5" r="3.6" fill="#9fb0e8" stroke="#111" stroke-width="0.6"/></svg><svg class="ab" style="left:19.5px;top:286.8px" width="18" height="18" viewBox="0 0 18 18"><circle cx="7" cy="11" r="3.4" fill="#fff" stroke="#555" stroke-width="0.6"/><circle cx="12" cy="11" r="3.4" fill="#2a2aa0" stroke="#111" stroke-width="0.6"/><circle cx="9.5" cy="6.5" r="3" fill="#9fb0e8" stroke="#555" stroke-width="0.6"/></svg><svg class="ab" style="left:0.5px;top:305.15000000000003px" width="18" height="18" viewBox="0 0 18 18"><path d="M3 7 Q10 5 13 14" fill="none" stroke="#333" stroke-width="1.1"/><circle cx="3" cy="7" r="1" fill="#333"/><path d="M17 17 L17 13 L13 17Z" fill="#3a3a3a"/></svg><svg class="ab" style="left:19.5px;top:305.15000000000003px" width="18" height="18" viewBox="0 0 18 18"><path d="M4 6 Q13 3 14 14" fill="none" stroke="#333" stroke-width="1"/><circle cx="4" cy="6" r="1.2" fill="#fff" stroke="#333" stroke-width="0.7"/><circle cx="9" cy="3.5" r="1.2" fill="#fff" stroke="#333" stroke-width="0.7"/><circle cx="13" cy="8" r="1.2" fill="#fff" stroke="#333" stroke-width="0.7"/><path d="M17 17 L17 13 L13 17Z" fill="#3a3a3a"/></svg><svg class="ab" style="left:0.5px;top:323.5px" width="18" height="18" viewBox="0 0 18 18"><path d="M3 3 L15 3 L15 6 L11 6 L11 15 L7 15 L7 6 L3 6Z" fill="#5a7ad8" stroke="#1c2a66" stroke-width="0.8"/></svg><svg class="ab" style="left:19.5px;top:323.5px" width="18" height="18" viewBox="0 0 18 18"><rect x="3" y="11" width="4" height="4" fill="#fff" stroke="#333" stroke-width="0.8"/><rect x="11" y="3" width="4" height="4" fill="#fff" stroke="#333" stroke-width="0.8"/><path d="M7 11 L11 7" stroke="#333" stroke-width="0.8" stroke-dasharray="1 1"/><path d="M17 17 L17 13 L13 17Z" fill="#3a3a3a"/></svg><svg class="ab" style="left:0.5px;top:341.85px" width="18" height="18" viewBox="0 0 18 18"><rect x="2" y="2" width="5" height="5" fill="#fff" stroke="#333" stroke-width="0.8"/><rect x="9" y="5" width="5" height="5" fill="#5f7ad8" stroke="#223" stroke-width="0.8"/><rect x="2" y="9" width="5" height="5" fill="#5f7ad8" stroke="#223" stroke-width="0.8"/><rect x="10" y="11" width="5" height="5" fill="#fff" stroke="#333" stroke-width="0.8"/></svg><svg class="ab" style="left:19.5px;top:341.85px" width="18" height="18" viewBox="0 0 18 18"><rect x="3" y="3" width="4" height="11" fill="#fff" stroke="#333" stroke-width="0.8"/><path d="M7 14 L14 6 L16 8 L9 16Z" fill="#5f7ad8" stroke="#223" stroke-width="0.7"/></svg><svg class="ab" style="left:0.5px;top:360.20000000000005px" width="18" height="18" viewBox="0 0 18 18"><path d="M2 6 L9 2 L16 6 L16 13 L9 17 L2 13Z" fill="#5470d6" stroke="#1c2a66" stroke-width="0.7"/><path d="M2 6 L9 9.5 L16 6 L9 2Z" fill="#8ea4ee"/><rect x="6" y="10" width="6" height="5" fill="#fff" stroke="#223" stroke-width="0.6"/><path d="M17 17 L17 13 L13 17Z" fill="#3a3a3a"/></svg><svg class="ab" style="left:19.5px;top:360.20000000000005px" width="18" height="18" viewBox="0 0 18 18"><path d="M2 13 L16 13 L14 16 L1 16Z" fill="#5f7ad8"/><path d="M5 7 L5 12 M9 7 L9 12 M13 7 L13 12 M3 9 L15 9" stroke="#333" stroke-width="0.9"/><path d="M17 17 L17 13 L13 17Z" fill="#3a3a3a"/></svg><svg class="ab" style="left:0.5px;top:378.55px" width="18" height="18" viewBox="0 0 18 18"><rect x="3.0" y="3.0" width="3" height="3" fill="#5f7ad8" stroke="#223" stroke-width="0.6"/><rect x="7.5" y="3.0" width="3" height="3" fill="#5f7ad8" stroke="#223" stroke-width="0.6"/><rect x="12.0" y="3.0" width="3" height="3" fill="#5f7ad8" stroke="#223" stroke-width="0.6"/><rect x="3.0" y="7.5" width="3" height="3" fill="#5f7ad8" stroke="#223" stroke-width="0.6"/><rect x="7.5" y="7.5" width="3" height="3" fill="#5f7ad8" stroke="#223" stroke-width="0.6"/><rect x="12.0" y="7.5" width="3" height="3" fill="#5f7ad8" stroke="#223" stroke-width="0.6"/><rect x="3.0" y="12.0" width="3" height="3" fill="#5f7ad8" stroke="#223" stroke-width="0.6"/><rect x="7.5" y="12.0" width="3" height="3" fill="#5f7ad8" stroke="#223" stroke-width="0.6"/><rect x="12.0" y="12.0" width="3" height="3" fill="#5f7ad8" stroke="#223" stroke-width="0.6"/><path d="M17 17 L17 13 L13 17Z" fill="#3a3a3a"/></svg><svg class="ab" style="left:19.5px;top:378.55px" width="18" height="18" viewBox="0 0 18 18"><rect x="6" y="2" width="6" height="4.5" rx="1" fill="#fff" stroke="#333" stroke-width="0.8"/><rect x="6" y="7" width="6" height="4.5" rx="1" fill="#fff" stroke="#333" stroke-width="0.8"/><rect x="6" y="12" width="6" height="4.5" rx="1" fill="#fff" stroke="#333" stroke-width="0.8"/><path d="M9 1 L9 17" stroke="#d01010" stroke-width="1"/><path d="M17 17 L17 13 L13 17Z" fill="#3a3a3a"/></svg><svg class="ab" style="left:0.5px;top:396.90000000000003px" width="18" height="18" viewBox="0 0 18 18"><path d="M3 5 L8 3 L10 14 L5 16Z" fill="#fff" stroke="#333" stroke-width="0.8"/><path d="M8 4 L13 3 L14 13 L10 15Z" fill="#5f7ad8" stroke="#223" stroke-width="0.7"/><path d="M17 17 L17 13 L13 17Z" fill="#3a3a3a"/></svg><svg class="ab" style="left:19.5px;top:396.90000000000003px" width="18" height="18" viewBox="0 0 18 18"><text x="12" y="13" font-family="Liberation Sans" font-size="10" font-weight="bold" text-anchor="middle" fill="#222">»</text></svg>
<div class="ab" style="left:42px;top:98px;width:660px;height:311px;background:#c0c0c0"></div>
<div class="ab" style="left:701.5px;top:98px;width:3px;height:311px;background:#eef0f4"></div>
<div class="ab" style="left:42px;top:98px;width:58px;height:12px;background:#9db2cb"></div>
<div class="t" style="left:47.80px;top:100.95px;font-size:8.8px;line-height:8.8px;color:#1a1a2a;transform:scaleX(0.872);transform-origin:0 0;">Perspective</div>
<div class="ab" style="left:93px;top:99px;width:1px;height:10.5px;background:#2a2a2a"></div>
<svg class="ab" style="left:94px;top:101px" width="6" height="6"><path d="M0.3 2 L5.3 2 L2.8 5Z" fill="#111"/></svg>
<svg class="ab" style="left:0;top:0" width="900" height="463" viewBox="0 0 900 463"><polygon points="209.0,260.3 212.0,263.3 217.5,311.9 222.5,346.0 213.9,318.0" fill="#c8c8c8" stroke="#c8c8c8" stroke-width="0.5" stroke-linejoin="round"/>
<polygon points="217.5,311.9 242.7,268.6 275.0,299.0 298.9,257.2 327.5,287.7 350.8,247.9 377.0,277.5 402.4,238.3 423.3,266.5 450.6,227.9 469.3,257.0 494.8,219.8 512.3,248.2 536.6,211.1 553.7,238.8 575.3,203.1 592.8,228.3 587.0,261.0 572.8,236.1 548.9,271.7 533.5,245.0 508.9,280.6 492.0,253.9 466.7,290.6 447.8,263.9 422.5,300.6 400.8,273.4 377.8,311.0 351.5,285.0 328.7,322.7 300.5,295.5 278.0,334.7 246.4,306.0 222.5,346.0" fill="#808080" stroke="#808080" stroke-width="0.5" stroke-linejoin="round"/>
<polygon points="246.4,306.0 245.8,325.3 256.5,322.9 278.0,334.7" fill="#6b6b6b" stroke="#6b6b6b" stroke-width="0.5" stroke-linejoin="round"/>
<polygon points="246.4,306.0 222.5,346.0 245.8,325.3" fill="#050505" stroke="#050505" stroke-width="0.5" stroke-linejoin="round"/>
<polygon points="209.0,260.3 235.5,270.5 242.7,268.6 217.5,311.9" fill="#d9d9d9" stroke="#d9d9d9" stroke-width="0.5" stroke-linejoin="round"/>
<polygon points="235.5,270.5 264.0,249.2 242.7,268.6" fill="#dbdbdb" stroke="#dbdbdb" stroke-width="0.5" stroke-linejoin="round"/>
<polygon points="231.7,242.3 264.0,249.2 235.5,270.5" fill="#ededed" stroke="#ededed" stroke-width="0.5" stroke-linejoin="round"/>
<polygon points="209.0,260.3 231.7,242.3 235.5,270.5" fill="#474747" stroke="#474747" stroke-width="0.5" stroke-linejoin="round"/>
<polygon points="209.0,260.3 231.7,242.3 225.7,264.2" fill="#e4e4e4" stroke="#e4e4e4" stroke-width="0.5" stroke-linejoin="round"/>
<polygon points="242.7,268.6 264.0,249.2 275.0,299.0" fill="#464646" stroke="#464646" stroke-width="0.5" stroke-linejoin="round"/>
<polygon points="300.5,295.5 296.2,315.9 308.9,311.7 328.7,322.7" fill="#6b6b6b" stroke="#6b6b6b" stroke-width="0.5" stroke-linejoin="round"/>
<polygon points="300.5,295.5 278.0,334.7 296.2,315.9" fill="#050505" stroke="#050505" stroke-width="0.5" stroke-linejoin="round"/>
<polygon points="264.0,249.2 290.2,260.1 298.9,257.2 275.0,299.0" fill="#d9d9d9" stroke="#d9d9d9" stroke-width="0.5" stroke-linejoin="round"/>
<polygon points="290.2,260.1 316.6,239.4 298.9,257.2" fill="#dbdbdb" stroke="#dbdbdb" stroke-width="0.5" stroke-linejoin="round"/>
<polygon points="284.3,232.7 316.6,239.4 290.2,260.1" fill="#ededed" stroke="#ededed" stroke-width="0.5" stroke-linejoin="round"/>
<polygon points="264.0,249.2 284.3,232.7 290.2,260.1" fill="#474747" stroke="#474747" stroke-width="0.5" stroke-linejoin="round"/>
<polygon points="264.0,249.2 284.3,232.7 280.5,253.6" fill="#e4e4e4" stroke="#e4e4e4" stroke-width="0.5" stroke-linejoin="round"/>
<polygon points="298.9,257.2 316.6,239.4 327.5,287.7" fill="#464646" stroke="#464646" stroke-width="0.5" stroke-linejoin="round"/>
<polygon points="351.5,285.0 343.7,303.1 356.7,301.4 377.8,311.0" fill="#6b6b6b" stroke="#6b6b6b" stroke-width="0.5" stroke-linejoin="round"/>
<polygon points="351.5,285.0 328.7,322.7 343.7,303.1" fill="#050505" stroke="#050505" stroke-width="0.5" stroke-linejoin="round"/>
<polygon points="316.6,239.4 339.1,251.7 350.8,247.9 327.5,287.7" fill="#d9d9d9" stroke="#d9d9d9" stroke-width="0.5" stroke-linejoin="round"/>
<polygon points="339.1,251.7 367.7,230.2 350.8,247.9" fill="#dbdbdb" stroke="#dbdbdb" stroke-width="0.5" stroke-linejoin="round"/>
<polygon points="334.3,223.1 367.7,230.2 339.1,251.7" fill="#ededed" stroke="#ededed" stroke-width="0.5" stroke-linejoin="round"/>
<polygon points="316.6,239.4 334.3,223.1 339.1,251.7" fill="#474747" stroke="#474747" stroke-width="0.5" stroke-linejoin="round"/>
<polygon points="316.6,239.4 334.3,223.1 330.8,244.6" fill="#e4e4e4" stroke="#e4e4e4" stroke-width="0.5" stroke-linejoin="round"/>
<polygon points="350.8,247.9 367.7,230.2 377.0,277.5" fill="#464646" stroke="#464646" stroke-width="0.5" stroke-linejoin="round"/>
<polygon points="400.8,273.4 391.3,291.6 422.5,300.6" fill="#6b6b6b" stroke="#6b6b6b" stroke-width="0.5" stroke-linejoin="round"/>
<polygon points="400.8,273.4 377.8,311.0 391.3,291.6" fill="#050505" stroke="#050505" stroke-width="0.5" stroke-linejoin="round"/>
<polygon points="367.7,230.2 387.3,241.8 402.4,238.3 377.0,277.5" fill="#d9d9d9" stroke="#d9d9d9" stroke-width="0.5" stroke-linejoin="round"/>
<polygon points="387.3,241.8 415.6,221.0 402.4,238.3" fill="#dbdbdb" stroke="#dbdbdb" stroke-width="0.5" stroke-linejoin="round"/>
<polygon points="382.6,215.2 415.6,221.0 387.3,241.8" fill="#ededed" stroke="#ededed" stroke-width="0.5" stroke-linejoin="round"/>
<polygon points="367.7,230.2 382.6,215.2 387.3,241.8" fill="#474747" stroke="#474747" stroke-width="0.5" stroke-linejoin="round"/>
<polygon points="367.7,230.2 382.6,215.2 380.0,235.0" fill="#e4e4e4" stroke="#e4e4e4" stroke-width="0.5" stroke-linejoin="round"/>
<polygon points="402.4,238.3 415.6,221.0 423.3,266.5" fill="#464646" stroke="#464646" stroke-width="0.5" stroke-linejoin="round"/>
<polygon points="447.8,263.9 435.6,282.9 466.7,290.6" fill="#6b6b6b" stroke="#6b6b6b" stroke-width="0.5" stroke-linejoin="round"/>
<polygon points="415.6,221.0 432.2,231.8 450.6,227.9 423.3,266.5" fill="#d9d9d9" stroke="#d9d9d9" stroke-width="0.5" stroke-linejoin="round"/>
<polygon points="432.2,231.8 461.5,213.2 450.6,227.9" fill="#dbdbdb" stroke="#dbdbdb" stroke-width="0.5" stroke-linejoin="round"/>
<polygon points="427.8,206.4 461.5,213.2 432.2,231.8" fill="#ededed" stroke="#ededed" stroke-width="0.5" stroke-linejoin="round"/>
<polygon points="415.6,221.0 427.8,206.4 432.2,231.8" fill="#474747" stroke="#474747" stroke-width="0.5" stroke-linejoin="round"/>
<polygon points="415.6,221.0 427.8,206.4 426.1,226.3" fill="#e4e4e4" stroke="#e4e4e4" stroke-width="0.5" stroke-linejoin="round"/>
<polygon points="450.6,227.9 461.5,213.2 469.3,257.0" fill="#464646" stroke="#464646" stroke-width="0.5" stroke-linejoin="round"/>
<polygon points="492.0,253.9 481.0,272.9 508.9,280.6" fill="#6b6b6b" stroke="#6b6b6b" stroke-width="0.5" stroke-linejoin="round"/>
<polygon points="461.5,213.2 476.0,222.0 494.8,219.8 469.3,257.0" fill="#d9d9d9" stroke="#d9d9d9" stroke-width="0.5" stroke-linejoin="round"/>
<polygon points="476.0,222.0 503.5,204.3 494.8,219.8" fill="#dbdbdb" stroke="#dbdbdb" stroke-width="0.5" stroke-linejoin="round"/>
<polygon points="470.8,198.3 503.5,204.3 476.0,222.0" fill="#ededed" stroke="#ededed" stroke-width="0.5" stroke-linejoin="round"/>
<polygon points="461.5,213.2 470.8,198.3 476.0,222.0" fill="#474747" stroke="#474747" stroke-width="0.5" stroke-linejoin="round"/>
<polygon points="461.5,213.2 470.8,198.3 470.6,217.2" fill="#e4e4e4" stroke="#e4e4e4" stroke-width="0.5" stroke-linejoin="round"/>
<polygon points="494.8,219.8 503.5,204.3 512.3,248.2" fill="#464646" stroke="#464646" stroke-width="0.5" stroke-linejoin="round"/>
<polygon points="533.5,245.0 523.5,262.8 548.9,271.7" fill="#6b6b6b" stroke="#6b6b6b" stroke-width="0.5" stroke-linejoin="round"/>
<polygon points="503.5,204.3 517.2,215.0 536.6,211.1 512.3,248.2" fill="#d9d9d9" stroke="#d9d9d9" stroke-width="0.5" stroke-linejoin="round"/>
<polygon points="517.2,215.0 544.3,196.8 536.6,211.1" fill="#dbdbdb" stroke="#dbdbdb" stroke-width="0.5" stroke-linejoin="round"/>
<polygon points="512.3,191.0 544.3,196.8 517.2,215.0" fill="#ededed" stroke="#ededed" stroke-width="0.5" stroke-linejoin="round"/>
<polygon points="503.5,204.3 512.3,191.0 517.2,215.0" fill="#474747" stroke="#474747" stroke-width="0.5" stroke-linejoin="round"/>
<polygon points="503.5,204.3 512.3,191.0 512.1,209.5" fill="#e4e4e4" stroke="#e4e4e4" stroke-width="0.5" stroke-linejoin="round"/>
<polygon points="536.6,211.1 544.3,196.8 553.7,238.8" fill="#464646" stroke="#464646" stroke-width="0.5" stroke-linejoin="round"/>
<polygon points="572.8,236.1 562.8,252.8 587.0,261.0" fill="#6b6b6b" stroke="#6b6b6b" stroke-width="0.5" stroke-linejoin="round"/>
<polygon points="544.3,196.8 558.5,207.0 575.3,203.1 553.7,238.8" fill="#d9d9d9" stroke="#d9d9d9" stroke-width="0.5" stroke-linejoin="round"/>
<polygon points="558.5,207.0 584.2,188.4 575.3,203.1" fill="#dbdbdb" stroke="#dbdbdb" stroke-width="0.5" stroke-linejoin="round"/>
<polygon points="551.2,184.4 584.2,188.4 558.5,207.0" fill="#ededed" stroke="#ededed" stroke-width="0.5" stroke-linejoin="round"/>
<polygon points="544.3,196.8 551.2,184.4 558.5,207.0" fill="#474747" stroke="#474747" stroke-width="0.5" stroke-linejoin="round"/>
<polygon points="544.3,196.8 551.2,184.4 553.2,201.7" fill="#e4e4e4" stroke="#e4e4e4" stroke-width="0.5" stroke-linejoin="round"/>
<polygon points="575.3,203.1 584.2,188.4 592.8,228.3" fill="#464646" stroke="#464646" stroke-width="0.5" stroke-linejoin="round"/></svg>
<svg class="ab" style="left:60px;top:360px" width="40" height="35" viewBox="60 360 40 35"><path d="M68.5 384 L68.5 370 M68.5 384 L77 377.5 M68.5 384 L85 388.5" fill="none" stroke="#6a6a6a" stroke-width="0.9"/></svg>
<div class="t" style="left:67.00px;top:362.07px;font-size:7px;line-height:7px;color:#555;">z</div>
<div class="t" style="left:74.50px;top:370.57px;font-size:7px;line-height:7px;color:#555;">y</div>
<div class="t" style="left:85.50px;top:385.07px;font-size:7px;line-height:7px;color:#555;">x</div>
<svg class="ab" style="left:0;top:408px" width="300" height="18" viewBox="0 408 300 18"><path d="M42.5 408 L42.5 417 L47.5 424.5 L72 424.5 Q74 424.5 74 422.5 L74 408" fill="#d4d9e5" stroke="#adb3c1" stroke-width="0.9"/><path d="M138 408 L148 424.5 L174 424.5 Q176 424.5 176 422.5 L176 408" fill="#d4d9e5" stroke="#adb3c1" stroke-width="0.9"/><path d="M176 408 L186 424.5 L212 424.5 Q214 424.5 214 422.5 L214 408" fill="#d4d9e5" stroke="#adb3c1" stroke-width="0.9"/><path d="M214 408 L224 424.5 L240 424.5 Q242 424.5 242 422.5 L242 408" fill="#d4d9e5" stroke="#adb3c1" stroke-width="0.9"/><path d="M68 408 L78 424.5 L136 424.5 Q138 424.5 138 422.5 L138 408" fill="#fafbfc" stroke="#c3c8d2" stroke-width="0.9"/><rect x="68" y="407.5" width="70" height="1.2" fill="#fafbfc"/><path d="M225.5 416 L233.5 416 M229.5 412 L229.5 420" stroke="#777" stroke-width="1.1"/><circle cx="229.5" cy="416" r="1.8" fill="#eee" stroke="#777" stroke-width="0.8"/></svg>
<div class="t" style="left:50.60px;top:412.64px;font-size:10.0px;line-height:10.0px;color:#22222c;transform:scaleX(1.061);transform-origin:0 0;">Top</div>
<div class="t" style="left:82.80px;top:412.64px;font-size:10.0px;line-height:10.0px;color:#22222c;transform:scaleX(0.955);transform-origin:0 0;">Perspective</div>
<div class="t" style="left:147.50px;top:412.64px;font-size:10.0px;line-height:10.0px;color:#22222c;transform:scaleX(1.028);transform-origin:0 0;">Front</div>
<div class="t" style="left:185.40px;top:412.64px;font-size:10.0px;line-height:10.0px;color:#22222c;transform:scaleX(1.028);transform-origin:0 0;">Right</div>
<div class="ab" style="left:707px;top:101px;width:193px;height:17px;background:#dfe3eb"></div>
<div class="ab" style="left:707px;top:101px;width:193px;height:1px;background:#cdd1da"></div>
<div class="ab" style="left:707px;top:117px;width:192px;height:307px;background:#f6f7f9;border:1px solid #c3c8d1"></div>
<svg class="ab" style="left:700px;top:100px" width="200" height="20" viewBox="700 100 200 20"><path d="M757 117.5 L763 105 Q764 104 766 104 L799 104 Q801 104 802 106 L809 117.5" fill="#d3d8e4" stroke="#a9afbd" stroke-width="0.9"/><path d="M803 117.5 L807 105 Q808 104 810 104 L834 104 Q836 104 837 106 L847 117.5" fill="#d3d8e4" stroke="#a9afbd" stroke-width="0.9"/><path d="M707.5 117.5 L707.5 106.5 Q707.5 104 710 104 L746 104 Q748 104 749 106 L759 117.5" fill="#fafbfc" stroke="#a9afbd" stroke-width="0.9"/><rect x="708" y="117" width="51" height="1.5" fill="#fafbfc"/></svg>
<svg class="ab" style="left:710.5px;top:105px" width="11" height="11"><path d="M5.5 5.5 L10.5 5.5 A5 5 0 0 1 9.785836503510563 8.075190374550271Z" fill="hsl(60,95%,48%)"/><path d="M5.5 5.5 L9.830127018922195 8.0 A5 5 0 0 1 7.924048101231685 9.873098535696979Z" fill="hsl(90,95%,48%)"/><path d="M5.5 5.5 L8.0 9.830127018922193 A5 5 0 0 1 5.412737967813583 10.499238475781956Z" fill="hsl(120,95%,48%)"/><path d="M5.5 5.5 L5.5 10.5 A5 5 0 0 1 2.9248096254497287 9.785836503510563Z" fill="hsl(150,95%,48%)"/><path d="M5.5 5.5 L3.000000000000001 9.830127018922195 A5 5 0 0 1 1.126901464303021 7.924048101231685Z" fill="hsl(180,95%,48%)"/><path d="M5.5 5.5 L1.1698729810778064 8.0 A5 5 0 0 1 0.5007615242180439 5.412737967813582Z" fill="hsl(210,95%,48%)"/><path d="M5.5 5.5 L0.5 5.500000000000001 A5 5 0 0 1 1.214163496489438 2.924809625449729Z" fill="hsl(240,95%,48%)"/><path d="M5.5 5.5 L1.1698729810778072 2.9999999999999996 A5 5 0 0 1 3.0759518987683157 1.1269014643030202Z" fill="hsl(270,95%,48%)"/><path d="M5.5 5.5 L2.999999999999998 1.1698729810778081 A5 5 0 0 1 5.587262032186415 0.5007615242180439Z" fill="hsl(300,95%,48%)"/><path d="M5.5 5.5 L5.499999999999999 0.5 A5 5 0 0 1 8.075190374550271 1.214163496489438Z" fill="hsl(330,95%,48%)"/><path d="M5.5 5.5 L8.0 1.1698729810778072 A5 5 0 0 1 9.873098535696979 3.0759518987683157Z" fill="hsl(0,95%,48%)"/><path d="M5.5 5.5 L9.830127018922191 2.999999999999998 A5 5 0 0 1 10.499238475781956 5.587262032186415Z" fill="hsl(30,95%,48%)"/><circle cx="5.5" cy="5.5" r="2.6" fill="#fff"/></svg><svg class="ab" style="left:764px;top:105px" width="10" height="10"><rect x="0.5" y="0.5" width="9" height="7" fill="#c8c8c8" stroke="#111" stroke-width="1"/><rect x="3" y="8" width="4" height="1.5" fill="#111"/></svg><svg class="ab" style="left:808px;top:105px" width="11" height="10"><rect x="0.5" y="0.5" width="10" height="9" fill="#dfe6f5" stroke="#445" stroke-width="0.8"/><circle cx="5.5" cy="5.5" r="3.3" fill="#2a50c0"/><text x="5.5" y="8" font-family="Liberation Sans" font-size="6" font-weight="bold" text-anchor="middle" fill="#fff">?</text></svg>
<div class="t" style="left:721.70px;top:106.65px;font-size:8.8px;line-height:8.8px;color:#1c1c24;transform:scaleX(0.843);transform-origin:0 0;">Properties</div>
<div class="t" style="left:775.10px;top:106.65px;font-size:8.8px;line-height:8.8px;color:#1c1c24;transform:scaleX(0.894);transform-origin:0 0;">Display</div>
<div class="t" style="left:819.80px;top:106.65px;font-size:8.8px;line-height:8.8px;color:#1c1c24;transform:scaleX(0.890);transform-origin:0 0;">Help</div>
<svg class="ab" style="left:887.5px;top:106.0px" width="12" height="12" viewBox="0 0 12 12"><circle cx="6" cy="6" r="4.3" fill="none" stroke="#8a8d94" stroke-width="1" stroke-dasharray="1.6 1.1"/><circle cx="6" cy="6" r="3.2" fill="#eef0f4" stroke="#9a9da4" stroke-width="0.8"/><circle cx="6" cy="6" r="1.2" fill="none" stroke="#9a9da4" stroke-width="0.7"/></svg>
<div class="ab" style="left:708px;top:121px;width:187px;height:16px;background:#f2f3f6"></div>
<div class="t" style="left:711.50px;top:125.78px;font-size:8.76px;line-height:8.76px;color:#22222a;transform:scaleX(0.775);transform-origin:0 0;">Viewport</div>
<div class="ab" style="left:715px;top:137px;width:180px;height:12px;background:#fff"></div>
<div class="ab" style="left:715px;top:148px;width:180px;height:1px;background:#e8eaee"></div>
<div class="ab" style="left:802px;top:137px;width:1px;height:12px;background:#e8eaee"></div>
<div class="t" style="left:718.00px;top:140.08px;font-size:8.76px;line-height:8.76px;color:#22222a;transform:scaleX(0.792);transform-origin:0 0;">Title</div>
<div class="t" style="left:806.00px;top:140.08px;font-size:8.76px;line-height:8.76px;color:#22222a;transform:scaleX(0.817);transform-origin:0 0;">Perspective</div>
<div class="ab" style="left:715px;top:149px;width:180px;height:13px;background:#fff"></div>
<div class="ab" style="left:715px;top:161px;width:180px;height:1px;background:#e8eaee"></div>
<div class="ab" style="left:802px;top:149px;width:1px;height:13px;background:#e8eaee"></div>
<div class="t" style="left:718.00px;top:152.53px;font-size:8.76px;line-height:8.76px;color:#8d8d94;transform:scaleX(0.792);transform-origin:0 0;">Width</div>
<div class="ab" style="left:803px;top:149px;width:92px;height:13px;background:#dde1e9"></div>
<div class="t" style="left:806.00px;top:152.53px;font-size:8.76px;line-height:8.76px;color:#8d8d94;transform:scaleX(0.817);transform-origin:0 0;">1000</div>
<div class="ab" style="left:715px;top:162px;width:180px;height:12px;background:#fff"></div>
<div class="ab" style="left:715px;top:173px;width:180px;height:1px;background:#e8eaee"></div>
<div class="ab" style="left:802px;top:162px;width:1px;height:12px;background:#e8eaee"></div>
<div class="t" style="left:718.00px;top:164.98px;font-size:8.76px;line-height:8.76px;color:#8d8d94;transform:scaleX(0.792);transform-origin:0 0;">Height</div>
<div class="ab" style="left:803px;top:162px;width:92px;height:12px;background:#dde1e9"></div>
<div class="t" style="left:806.00px;top:164.98px;font-size:8.76px;line-height:8.76px;color:#8d8d94;transform:scaleX(0.817);transform-origin:0 0;">470</div>
<div class="ab" style="left:715px;top:174px;width:180px;height:13px;background:#fff"></div>
<div class="ab" style="left:715px;top:186px;width:180px;height:1px;background:#e8eaee"></div>
<div class="ab" style="left:802px;top:174px;width:1px;height:13px;background:#e8eaee"></div>
<div class="t" style="left:718.00px;top:177.43px;font-size:8.76px;line-height:8.76px;color:#22222a;transform:scaleX(0.792);transform-origin:0 0;">Projection</div>
<div class="t" style="left:806.00px;top:177.43px;font-size:8.76px;line-height:8.76px;color:#22222a;transform:scaleX(0.817);transform-origin:0 0;">Perspective</div>
<svg class="ab" style="left:882px;top:174px" width="13" height="13"><rect x="0.5" y="0.5" width="12" height="12" fill="#f0f0f2" stroke="#c2c5cc"/><path d="M3.5 5 L6.5 8 L9.5 5" fill="none" stroke="#222" stroke-width="1.3"/></svg>
<div class="ab" style="left:708px;top:187px;width:187px;height:16px;background:#f2f3f6"></div>
<div class="t" style="left:711.50px;top:191.78px;font-size:8.76px;line-height:8.76px;color:#22222a;transform:scaleX(0.775);transform-origin:0 0;">Camera</div>
<div class="ab" style="left:715px;top:203px;width:180px;height:12px;background:#fff"></div>
<div class="ab" style="left:715px;top:214px;width:180px;height:1px;background:#e8eaee"></div>
<div class="ab" style="left:802px;top:203px;width:1px;height:12px;background:#e8eaee"></div>
<div class="t" style="left:718.00px;top:206.08px;font-size:8.76px;line-height:8.76px;color:#22222a;transform:scaleX(0.792);transform-origin:0 0;">Lens Length</div>
<div class="t" style="left:806.00px;top:206.08px;font-size:8.76px;line-height:8.76px;color:#22222a;transform:scaleX(0.817);transform-origin:0 0;">50.0</div>
<div class="ab" style="left:715px;top:215px;width:180px;height:13px;background:#fff"></div>
<div class="ab" style="left:715px;top:227px;width:180px;height:1px;background:#e8eaee"></div>
<div class="ab" style="left:802px;top:215px;width:1px;height:13px;background:#e8eaee"></div>
<div class="t" style="left:718.00px;top:218.53px;font-size:8.76px;line-height:8.76px;color:#22222a;transform:scaleX(0.792);transform-origin:0 0;">Rotation</div>
<div class="t" style="left:806.00px;top:218.53px;font-size:8.76px;line-height:8.76px;color:#22222a;transform:scaleX(0.817);transform-origin:0 0;">0.0</div>
<div class="ab" style="left:715px;top:228px;width:180px;height:12px;background:#fff"></div>
<div class="ab" style="left:715px;top:239px;width:180px;height:1px;background:#e8eaee"></div>
<div class="ab" style="left:802px;top:228px;width:1px;height:12px;background:#e8eaee"></div>
<div class="t" style="left:718.00px;top:230.98px;font-size:8.76px;line-height:8.76px;color:#22222a;transform:scaleX(0.792);transform-origin:0 0;">X Location</div>
<div class="t" style="left:806.00px;top:230.98px;font-size:8.76px;line-height:8.76px;color:#22222a;transform:scaleX(0.817);transform-origin:0 0;">-65613.032</div>
<div class="ab" style="left:715px;top:240px;width:180px;height:13px;background:#fff"></div>
<div class="ab" style="left:715px;top:252px;width:180px;height:1px;background:#e8eaee"></div>
<div class="ab" style="left:802px;top:240px;width:1px;height:13px;background:#e8eaee"></div>
<div class="t" style="left:718.00px;top:243.43px;font-size:8.76px;line-height:8.76px;color:#22222a;transform:scaleX(0.792);transform-origin:0 0;">Y Location</div>
<div class="t" style="left:806.00px;top:243.43px;font-size:8.76px;line-height:8.76px;color:#22222a;transform:scaleX(0.817);transform-origin:0 0;">-8716.535</div>
<div class="ab" style="left:715px;top:253px;width:180px;height:12px;background:#fff"></div>
<div class="ab" style="left:715px;top:264px;width:180px;height:1px;background:#e8eaee"></div>
<div class="ab" style="left:802px;top:253px;width:1px;height:12px;background:#e8eaee"></div>
<div class="t" style="left:718.00px;top:255.88px;font-size:8.76px;line-height:8.76px;color:#22222a;transform:scaleX(0.792);transform-origin:0 0;">Z Location</div>
<div class="t" style="left:806.00px;top:255.88px;font-size:8.76px;line-height:8.76px;color:#22222a;transform:scaleX(0.817);transform-origin:0 0;">13087.110</div>
<div class="ab" style="left:715px;top:265px;width:180px;height:13px;background:#fff"></div>
<div class="ab" style="left:715px;top:277px;width:180px;height:1px;background:#e8eaee"></div>
<div class="ab" style="left:802px;top:265px;width:1px;height:13px;background:#e8eaee"></div>
<div class="t" style="left:718.00px;top:268.33px;font-size:8.76px;line-height:8.76px;color:#22222a;transform:scaleX(0.792);transform-origin:0 0;">Location</div>
<div class="ab" style="left:804px;top:266px;width:91px;height:12px;background:linear-gradient(#f2f2f2,#e0e0e0);border:1px solid #aeb0b5;border-radius:2px"></div>
<div class="t" style="left:837.50px;top:268.33px;font-size:8.76px;line-height:8.76px;color:#22222a;transform:scaleX(0.817);transform-origin:0 0;">Place...</div>
<div class="ab" style="left:708px;top:277.3px;width:187px;height:15.0px;background:#f2f3f6"></div>
<div class="t" style="left:711.50px;top:281.08px;font-size:8.76px;line-height:8.76px;color:#22222a;transform:scaleX(0.775);transform-origin:0 0;">Target</div>
<div class="ab" style="left:715px;top:292px;width:180px;height:13px;background:#fff"></div>
<div class="ab" style="left:715px;top:304px;width:180px;height:1px;background:#e8eaee"></div>
<div class="ab" style="left:802px;top:292px;width:1px;height:13px;background:#e8eaee"></div>
<div class="t" style="left:718.00px;top:295.38px;font-size:8.76px;line-height:8.76px;color:#22222a;transform:scaleX(0.792);transform-origin:0 0;">X Target</div>
<div class="t" style="left:806.00px;top:295.38px;font-size:8.76px;line-height:8.76px;color:#22222a;transform:scaleX(0.817);transform-origin:0 0;">-75228.078</div>
<div class="ab" style="left:715px;top:305px;width:180px;height:12px;background:#fff"></div>
<div class="ab" style="left:715px;top:316px;width:180px;height:1px;background:#e8eaee"></div>
<div class="ab" style="left:802px;top:305px;width:1px;height:12px;background:#e8eaee"></div>
<div class="t" style="left:718.00px;top:307.83px;font-size:8.76px;line-height:8.76px;color:#22222a;transform:scaleX(0.792);transform-origin:0 0;">Y Target</div>
<div class="t" style="left:806.00px;top:307.83px;font-size:8.76px;line-height:8.76px;color:#22222a;transform:scaleX(0.817);transform-origin:0 0;">13503.299</div>
<div class="ab" style="left:715px;top:317px;width:180px;height:13px;background:#fff"></div>
<div class="ab" style="left:715px;top:329px;width:180px;height:1px;background:#e8eaee"></div>
<div class="ab" style="left:802px;top:317px;width:1px;height:13px;background:#e8eaee"></div>
<div class="t" style="left:718.00px;top:320.28px;font-size:8.76px;line-height:8.76px;color:#22222a;transform:scaleX(0.792);transform-origin:0 0;">Z Target</div>
<div class="t" style="left:806.00px;top:320.28px;font-size:8.76px;line-height:8.76px;color:#22222a;transform:scaleX(0.817);transform-origin:0 0;">-1231.310</div>
<div class="ab" style="left:715px;top:330px;width:180px;height:12px;background:#fff"></div>
<div class="ab" style="left:715px;top:341px;width:180px;height:1px;background:#e8eaee"></div>
<div class="ab" style="left:802px;top:330px;width:1px;height:12px;background:#e8eaee"></div>
<div class="t" style="left:718.00px;top:332.73px;font-size:8.76px;line-height:8.76px;color:#22222a;transform:scaleX(0.792);transform-origin:0 0;">Location</div>
<div class="ab" style="left:804px;top:331px;width:91px;height:11px;background:linear-gradient(#f2f2f2,#e0e0e0);border:1px solid #aeb0b5;border-radius:2px"></div>
<div class="t" style="left:837.50px;top:332.73px;font-size:8.76px;line-height:8.76px;color:#22222a;transform:scaleX(0.817);transform-origin:0 0;">Place...</div>
<div class="ab" style="left:708px;top:342.5px;width:187px;height:15.0px;background:#f2f3f6"></div>
<div class="t" style="left:711.50px;top:346.28px;font-size:8.76px;line-height:8.76px;color:#22222a;transform:scaleX(0.775);transform-origin:0 0;">Wallpaper</div>
<div class="ab" style="left:715px;top:358px;width:180px;height:12px;background:#fff"></div>
<div class="ab" style="left:715px;top:369px;width:180px;height:1px;background:#e8eaee"></div>
<div class="ab" style="left:802px;top:358px;width:1px;height:12px;background:#e8eaee"></div>
<div class="t" style="left:718.00px;top:360.58px;font-size:8.76px;line-height:8.76px;color:#22222a;transform:scaleX(0.792);transform-origin:0 0;">Filename</div>
<div class="t" style="left:806.00px;top:360.58px;font-size:8.76px;line-height:8.76px;color:#22222a;transform:scaleX(0.817);transform-origin:0 0;">(none)</div>
<svg class="ab" style="left:883px;top:360px" width="12" height="10"><rect x="0.5" y="0.5" width="11" height="9" fill="#eeeff2" stroke="#b9bcc4"/><path d="M3 7.5h1M5.5 7.5h1M8 7.5h1" stroke="#555"/></svg>
<div class="ab" style="left:715px;top:370px;width:180px;height:12px;background:#fff"></div>
<div class="ab" style="left:715px;top:381px;width:180px;height:1px;background:#e8eaee"></div>
<div class="ab" style="left:802px;top:370px;width:1px;height:12px;background:#e8eaee"></div>
<div class="t" style="left:718.00px;top:373.03px;font-size:8.76px;line-height:8.76px;color:#22222a;transform:scaleX(0.792);transform-origin:0 0;">Show</div>
<svg class="ab" style="left:805px;top:371.5px" width="10" height="10"><rect x="0.5" y="0.5" width="9" height="9" fill="#fff" stroke="#6d6f75"/><path d="M2.2 4.8 L4 7.2 L7.6 2.6" fill="none" stroke="#111" stroke-width="1.25"/></svg>
<div class="ab" style="left:715px;top:382px;width:180px;height:13px;background:#fff"></div>
<div class="ab" style="left:715px;top:394px;width:180px;height:1px;background:#e8eaee"></div>
<div class="ab" style="left:802px;top:382px;width:1px;height:13px;background:#e8eaee"></div>
<div class="t" style="left:718.00px;top:385.48px;font-size:8.76px;line-height:8.76px;color:#22222a;transform:scaleX(0.792);transform-origin:0 0;">Gray</div>
<svg class="ab" style="left:805px;top:383.5px" width="10" height="10"><rect x="0.5" y="0.5" width="9" height="9" fill="#fff" stroke="#6d6f75"/><path d="M2.2 4.8 L4 7.2 L7.6 2.6" fill="none" stroke="#111" stroke-width="1.25"/></svg>
<div class="ab" style="left:2px;top:431px;width:1px;height:17px;background:#c5c9d2"></div>
<svg class="ab" style="left:0;top:430px" width="420" height="14" viewBox="0 430 420 14"><rect x="7.7" y="432.5" width="8" height="8" fill="#fff" stroke="#7a7d84"/><path d="M9.4 436.3 L11.1 438.6 L14.2 434.2" fill="none" stroke="#111" stroke-width="1.15"/><rect x="36.8" y="432.5" width="8" height="8" fill="#fff" stroke="#7a7d84"/><path d="M38.5 436.3 L40.199999999999996 438.6 L43.3 434.2" fill="none" stroke="#111" stroke-width="1.15"/><rect x="68.5" y="432.5" width="8" height="8" fill="#fff" stroke="#7a7d84"/><path d="M70.2 436.3 L71.9 438.6 L75 434.2" fill="none" stroke="#111" stroke-width="1.15"/><rect x="100.5" y="432.5" width="8" height="8" fill="#fff" stroke="#7a7d84"/><path d="M102.2 436.3 L103.9 438.6 L107 434.2" fill="none" stroke="#111" stroke-width="1.15"/><rect x="128.5" y="432.5" width="8" height="8" fill="#fff" stroke="#7a7d84"/><rect x="157.8" y="432.5" width="8" height="8" fill="#fff" stroke="#7a7d84"/><path d="M159.5 436.3 L161.20000000000002 438.6 L164.3 434.2" fill="none" stroke="#111" stroke-width="1.15"/><rect x="182.2" y="432.5" width="8" height="8" fill="#fff" stroke="#7a7d84"/><path d="M183.89999999999998 436.3 L185.6 438.6 L188.7 434.2" fill="none" stroke="#111" stroke-width="1.15"/><rect x="213.2" y="432.5" width="8" height="8" fill="#fff" stroke="#7a7d84"/><path d="M214.89999999999998 436.3 L216.6 438.6 L219.7 434.2" fill="none" stroke="#111" stroke-width="1.15"/><rect x="242.2" y="432.5" width="8" height="8" fill="#fff" stroke="#7a7d84"/><rect x="276.5" y="432.5" width="8" height="8" fill="#fff" stroke="#7a7d84"/><rect x="306.5" y="432.5" width="8" height="8" fill="#fff" stroke="#7a7d84"/><rect x="342.2" y="432.5" width="8" height="8" fill="#e2e4e8" stroke="#c8cacf"/><rect x="381.2" y="432.5" width="8" height="8" fill="#e2e4e8" stroke="#c8cacf"/></svg>
<div class="t" style="left:18.30px;top:433.21px;font-size:7.2px;line-height:7.2px;color:#22222a;">End</div>
<div class="t" style="left:47.90px;top:433.21px;font-size:7.2px;line-height:7.2px;color:#22222a;">Near</div>
<div class="t" style="left:79.30px;top:433.21px;font-size:7.2px;line-height:7.2px;color:#22222a;">Point</div>
<div class="t" style="left:111.30px;top:433.21px;font-size:7.2px;line-height:7.2px;color:#22222a;">Mid</div>
<div class="t" style="left:138.80px;top:433.21px;font-size:7.2px;line-height:7.2px;color:#22222a;">Cen</div>
<div class="t" style="left:168.30px;top:433.21px;font-size:7.2px;line-height:7.2px;color:#22222a;">Int</div>
<div class="t" style="left:192.90px;top:433.21px;font-size:7.2px;line-height:7.2px;color:#22222a;">Perp</div>
<div class="t" style="left:223.60px;top:433.21px;font-size:7.2px;line-height:7.2px;color:#22222a;">Tan</div>
<div class="t" style="left:252.30px;top:433.21px;font-size:7.2px;line-height:7.2px;color:#22222a;">Quad</div>
<div class="t" style="left:286.30px;top:433.21px;font-size:7.2px;line-height:7.2px;color:#22222a;">Knot</div>
<div class="t" style="left:316.90px;top:433.21px;font-size:7.2px;line-height:7.2px;color:#22222a;">Vertex</div>
<div class="t" style="left:352.90px;top:433.21px;font-size:7.2px;line-height:7.2px;color:#45454c;">Project</div>
<div class="t" style="left:391.60px;top:433.21px;font-size:7.2px;line-height:7.2px;color:#45454c;">Disable</div>
<div class="ab" style="left:0px;top:449px;width:900px;height:14px;background:#e2e5eb"></div>
<div class="ab" style="left:0px;top:449px;width:900px;height:1px;background:#c3c7cf"></div>
<div class="ab" style="left:432px;top:450px;width:31.5px;height:13px;background:#edf1f7"></div>
<div class="ab" style="left:498.6px;top:450px;width:136px;height:13px;background:#edf1f7"></div>
<div class="ab" style="left:35.5px;top:450px;width:1px;height:13px;background:#c6cad2"></div>
<div class="ab" style="left:37.5px;top:450px;width:1px;height:13px;background:#c6cad2"></div>
<div class="ab" style="left:95px;top:450px;width:1px;height:13px;background:#c6cad2"></div>
<div class="ab" style="left:153px;top:450px;width:1px;height:13px;background:#c6cad2"></div>
<div class="ab" style="left:210px;top:450px;width:1px;height:13px;background:#c6cad2"></div>
<div class="ab" style="left:268px;top:450px;width:1px;height:13px;background:#c6cad2"></div>
<div class="ab" style="left:383px;top:450px;width:1px;height:13px;background:#c6cad2"></div>
<div class="ab" style="left:432px;top:450px;width:1px;height:13px;background:#c6cad2"></div>
<div class="ab" style="left:463.5px;top:450px;width:1px;height:13px;background:#c6cad2"></div>
<div class="ab" style="left:498.6px;top:450px;width:1px;height:13px;background:#c6cad2"></div>
<div class="ab" style="left:535.5px;top:450px;width:1px;height:13px;background:#c6cad2"></div>
<div class="ab" style="left:591px;top:450px;width:1px;height:13px;background:#c6cad2"></div>
<div class="ab" style="left:634.5px;top:450px;width:1px;height:13px;background:#c6cad2"></div>
<div class="ab" style="left:706.5px;top:450px;width:1px;height:13px;background:#c6cad2"></div>
<div class="ab" style="left:735.6px;top:450px;width:1px;height:13px;background:#c6cad2"></div>
<div class="ab" style="left:894px;top:450px;width:1px;height:13px;background:#c6cad2"></div>
<div class="t" style="left:4.20px;top:453.55px;font-size:8.8px;line-height:8.8px;color:#1c1c24;transform:scaleX(0.953);transform-origin:0 0;">CPlane</div>
<div class="t" style="left:42.00px;top:453.55px;font-size:8.8px;line-height:8.8px;color:#1c1c24;transform:scaleX(0.934);transform-origin:0 0;">x -72250.590</div>
<div class="t" style="left:101.50px;top:453.55px;font-size:8.8px;line-height:8.8px;color:#1c1c24;transform:scaleX(0.943);transform-origin:0 0;">y 14744.529</div>
<div class="t" style="left:167.80px;top:453.55px;font-size:8.8px;line-height:8.8px;color:#1c1c24;transform:scaleX(0.960);transform-origin:0 0;">z 0.000</div>
<div class="t" style="left:220.20px;top:453.55px;font-size:8.8px;line-height:8.8px;color:#1c1c24;transform:scaleX(0.958);transform-origin:0 0;">Millimeters</div>
<div class="t" style="left:281.80px;top:453.55px;font-size:8.8px;line-height:8.8px;color:#1c1c24;transform:scaleX(0.947);transform-origin:0 0;">Default</div>
<div class="t" style="left:389.50px;top:453.55px;font-size:8.8px;line-height:8.8px;color:#1c1c24;transform:scaleX(0.934);transform-origin:0 0;">Grid Snap</div>
<div class="t" style="left:437.50px;top:453.55px;font-size:8.8px;line-height:8.8px;color:#1c1c24;font-weight:bold;transform:scaleX(0.919);transform-origin:0 0;">Ortho</div>
<div class="t" style="left:469.90px;top:453.55px;font-size:8.8px;line-height:8.8px;color:#1c1c24;transform:scaleX(0.983);transform-origin:0 0;">Planar</div>
<div class="t" style="left:504.20px;top:453.55px;font-size:8.8px;line-height:8.8px;color:#1c1c24;font-weight:bold;transform:scaleX(0.942);transform-origin:0 0;">Osnap</div>
<div class="t" style="left:541.00px;top:453.55px;font-size:8.8px;line-height:8.8px;color:#1c1c24;font-weight:bold;transform:scaleX(0.928);transform-origin:0 0;">SmartTrack</div>
<div class="t" style="left:597.10px;top:453.55px;font-size:8.8px;line-height:8.8px;color:#1c1c24;font-weight:bold;transform:scaleX(0.906);transform-origin:0 0;">Gumball</div>
<div class="t" style="left:643.90px;top:453.55px;font-size:8.8px;line-height:8.8px;color:#1c1c24;transform:scaleX(0.945);transform-origin:0 0;">Record History</div>
<div class="t" style="left:712.00px;top:453.55px;font-size:8.8px;line-height:8.8px;color:#1c1c24;transform:scaleX(0.972);transform-origin:0 0;">Filter</div>
<div class="t" style="left:738.10px;top:453.55px;font-size:8.8px;line-height:8.8px;color:#1c1c24;transform:scaleX(0.924);transform-origin:0 0;">Minutes from last save: 414</div>
<div class="ab" style="left:272px;top:453px;width:8px;height:9px;background:#000"></div>
</body></html>
